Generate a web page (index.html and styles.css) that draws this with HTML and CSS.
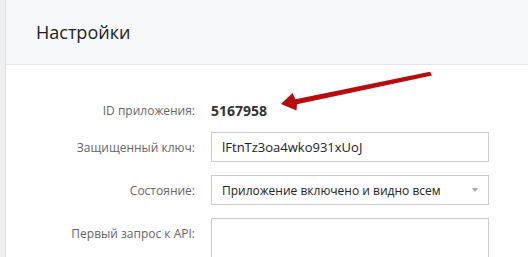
FILE: index.html
```html
<!DOCTYPE html>
<html lang="ru">
<head>
  <meta charset="UTF-8">
  <meta name="viewport" content="width=device-width, initial-scale=1.0">
  <title>Настройки</title>
  <link rel="stylesheet" href="styles.css">
</head>
<body>
  <div class="page">
    <div class="card">
      <div class="card-head">
        <h1>Настройки</h1>
      </div>
      <div class="form">
        <div class="row row-info">
          <label>ID приложения:</label>
          <b class="app-id">5167958</b>
        </div>
        <div class="row">
          <label>Защищенный ключ:</label>
          <input class="field" type="text" value="lFtnTz3oa4wko931xUoJ">
        </div>
        <div class="row">
          <label>Состояние:</label>
          <div class="field select">
            <span>Приложение включено и видно всем</span>
            <span class="caret"></span>
          </div>
        </div>
        <div class="row row-top">
          <label>Первый запрос к API:</label>
          <textarea class="field area"></textarea>
        </div>
      </div>
    </div>

    <svg class="pointer" width="528" height="257" viewBox="0 0 528 257">
      <polygon points="430,71.8 432,75.6 297,104.2 296.5,110.5 281,104 292.5,93 295.5,99.2" fill="#b80c0c"/>
    </svg>
  </div>
</body>
</html>
```

FILE: styles.css
```css
body {
  margin: 0;
  padding: 0;
  background-color: #eef0f2;
  font-family: "Open Sans", Arial, sans-serif;
  overflow: hidden;
}

.page {
  position: relative;
  padding-left: 5px;
  height: 257px;
  overflow: hidden;
}

.card {
  background-color: #fff;
  border-left: 1px solid #e0e2e6;
  height: 100%;
}

.card-head {
  height: 64px;
  display: flex;
  align-items: center;
  padding-left: 30px;
  background-color: #f7f8fa;
  border-bottom: 1px solid #e7e8ec;
}

.card-head h1 {
  margin: 0;
  font-size: 18px;
  font-weight: normal;
  color: #222;
}

.form {
  padding-top: 35px;
  display: flex;
  flex-direction: column;
}

.row {
  display: grid;
  grid-template-columns: 189px 278px;
  column-gap: 16px;
  align-items: center;
  margin-bottom: 13px;
  font-size: 12px;
}

.row label {
  text-align: right;
  color: #666;
}

.row-info {
  height: 20px;
  margin-bottom: 12px;
}

.app-id {
  color: #333;
  font-weight: bold;
  font-size: 14px;
}

.row-top {
  align-items: start;
}

.row-top label {
  padding-top: 7px;
}

.field {
  box-sizing: border-box;
  width: 278px;
  height: 30px;
  margin: 0;
  padding: 0 10px;
  border: 1px solid #c9cbce;
  border-radius: 0;
  background: #fff;
  font-family: "Open Sans", Arial, sans-serif;
  font-size: 13px;
  color: #222;
  outline: none;
}

.select {
  display: flex;
  align-items: center;
  justify-content: space-between;
  font-size: 12px;
}

.caret {
  width: 0;
  height: 0;
  border-left: 3px solid transparent;
  border-right: 3px solid transparent;
  border-top: 4px solid #a8a8a8;
}

.area {
  height: 70px;
  resize: none;
}

.pointer {
  position: absolute;
  left: 0;
  top: 0;
  pointer-events: none;
}
```
